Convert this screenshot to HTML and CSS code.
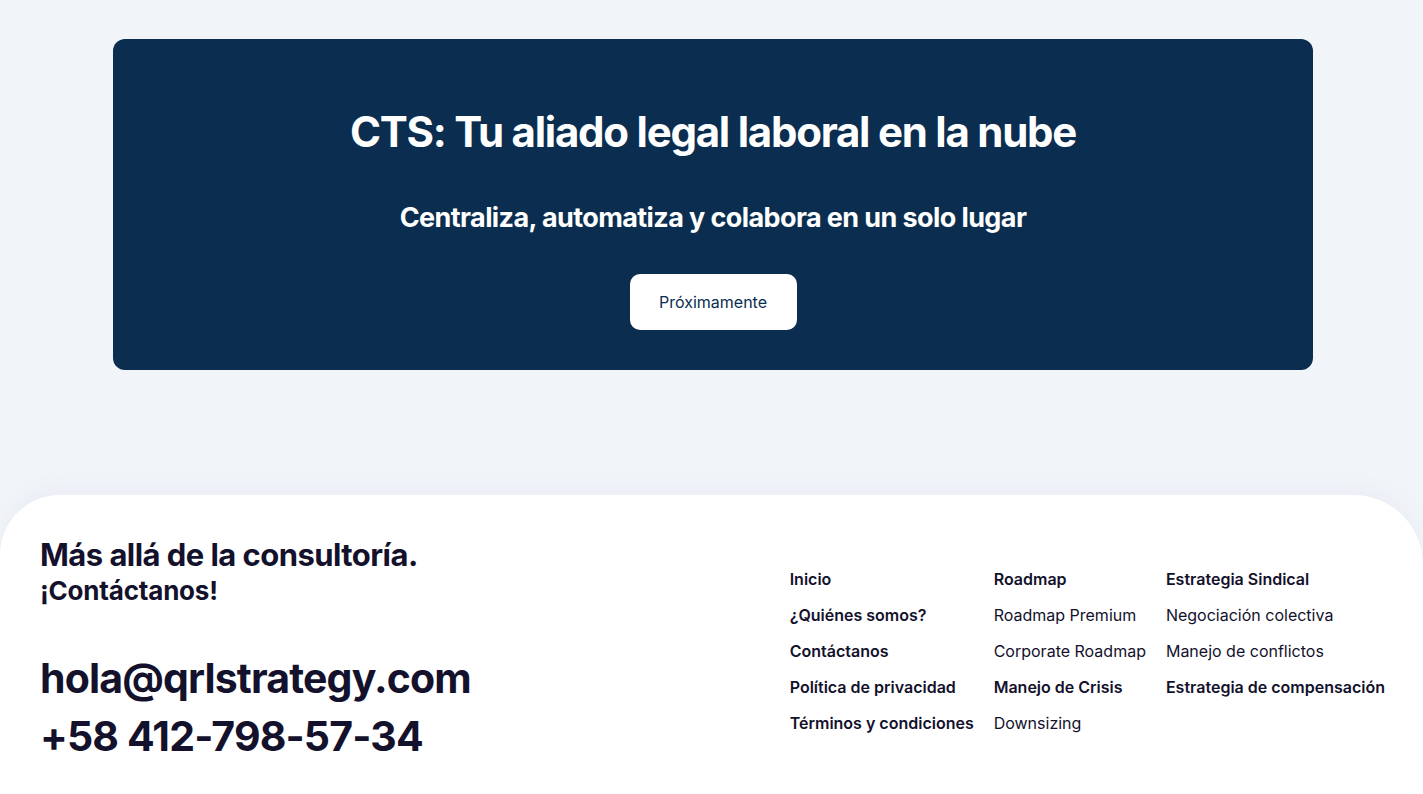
FILE: index.html
```html
<!DOCTYPE html>
<html lang="es">
<head>
<meta charset="utf-8">
<title>CTS</title>
<link rel="stylesheet" href="styles.css">
</head>
<body>
<main class="main">
  <section class="hero">
    <h1 class="hero-title">CTS: Tu aliado legal laboral en la nube</h1>
    <p class="hero-sub">Centraliza, automatiza y colabora en un solo lugar</p>
    <a class="hero-btn" href="#">Próximamente</a>
  </section>
</main>
<footer class="footer">
  <div class="contact">
    <h2 class="contact-title">Más allá de la consultoría.</h2>
    <p class="contact-sub">¡Contáctanos!</p>
    <p class="contact-big">hola@qrlstrategy.com</p>
    <p class="contact-big">+58 412-798-57-34</p>
  </div>
  <nav class="links">
    <ul class="col">
      <li class="b">Inicio</li>
      <li class="b">¿Quiénes somos?</li>
      <li class="b">Contáctanos</li>
      <li class="b">Política de privacidad</li>
      <li class="b">Términos y condiciones</li>
    </ul>
    <ul class="col">
      <li class="b">Roadmap</li>
      <li>Roadmap Premium</li>
      <li>Corporate Roadmap</li>
      <li class="b">Manejo de Crisis</li>
      <li>Downsizing</li>
    </ul>
    <ul class="col">
      <li class="b">Estrategia Sindical</li>
      <li>Negociación colectiva</li>
      <li>Manejo de conflictos</li>
      <li class="b">Estrategia de compensación</li>
    </ul>
  </nav>
</footer>
</body>
</html>
```
FILE: styles.css
```css
* { box-sizing: border-box; }
html, body { margin: 0; padding: 0; }
body {
  background: #f1f4f9;
  font-family: Inter, "Noto Sans", sans-serif;
  color: #13112c;
  height: 794px;
  overflow: hidden;
}
.main {
  padding-top: 39px;
}
.hero {
  width: 1200px;
  margin: 0 0 0 113px;
  height: 331px;
  background: #0b2e50;
  border-radius: 12px;
  display: flex;
  flex-direction: column;
  align-items: center;
  padding-top: 68px;
  color: #fff;
}
.hero-title {
  margin: 0;
  font-size: 42px;
  line-height: 50px;
  font-weight: 700;
  letter-spacing: -1.25px;
}
.hero-sub {
  margin: 45px 0 0;
  font-size: 27px;
  line-height: 32px;
  font-weight: 700;
  letter-spacing: -0.6px;
}
.hero-btn {
  margin-top: 40px;
  width: 167px;
  height: 56px;
  background: #fff;
  border-radius: 10px;
  color: #0b2e50;
  font-size: 16px;
  text-decoration: none;
  display: flex;
  align-items: center;
  justify-content: center;
}
.footer {
  margin-top: 125px;
  background: #fff;
  border-radius: 60px 70px 0 0;
  box-shadow: 0 -8px 24px rgba(20, 30, 60, 0.03);
  min-height: 320px;
  display: flex;
  justify-content: space-between;
  padding: 41px 38px 0 40px;
}
.contact-title {
  margin: 0;
  font-size: 31px;
  line-height: 38px;
  font-weight: 700;
  letter-spacing: -0.55px;
}
.contact-sub {
  margin: 2px 0 0;
  font-size: 26px;
  line-height: 30px;
  font-weight: 700;
  letter-spacing: -0.2px;
}
.contact-big {
  margin: 0;
  font-size: 41px;
  line-height: 58px;
  font-weight: 700;
  letter-spacing: -0.85px;
}
.contact-sub + .contact-big { margin-top: 43px; }
.links {
  display: flex;
  gap: 20px;
  padding-top: 34px;
}
.col {
  list-style: none;
  margin: 0;
  padding: 0;
  display: flex;
  flex-direction: column;
  gap: 17px;
}
.col li {
  font-size: 16px;
  line-height: 19px;
  font-weight: 400;
}
.col li.b { font-weight: 600; }
```
